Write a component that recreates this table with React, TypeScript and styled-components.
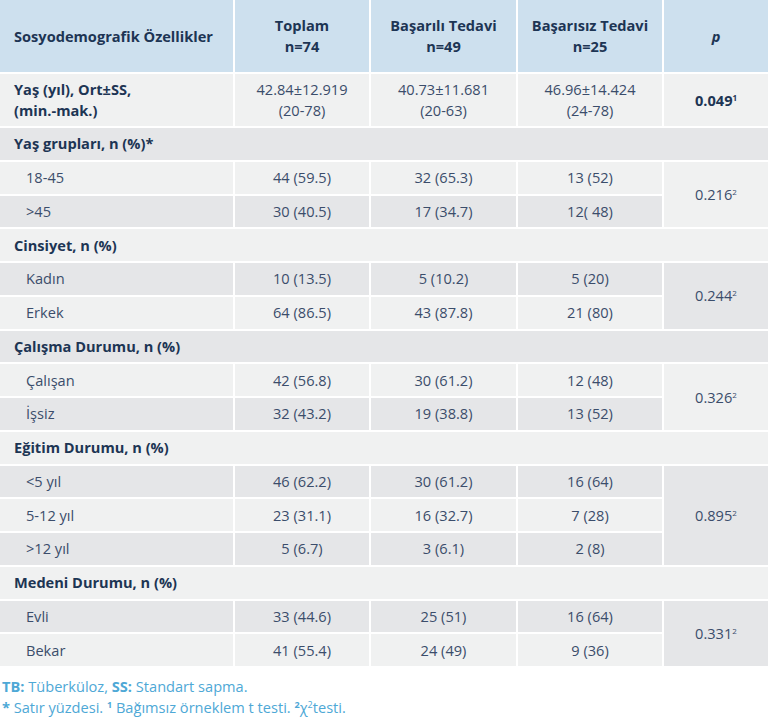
import React from 'react'
import styled, { createGlobalStyle } from 'styled-components'

const GlobalStyle = createGlobalStyle`
  html, body {
    margin: 0;
    padding: 0;
    background: #ffffff;
    overflow: hidden;
  }
  body {
    font-family: 'Open Sans', 'Noto Sans', sans-serif;
  }
`

const Wrapper = styled.div`
  width: 768px;
  overflow: hidden;
`

const Table = styled.table`
  border-collapse: separate;
  border-spacing: 2px;
  margin: -2px -2px 0;
  width: calc(100% + 4px);
  table-layout: fixed;
  font-size: 14.6px;
  color: #3b4d6b;

  tbody tr:nth-child(odd) td {
    background: #f0f1f1;
  }
  tbody tr:nth-child(even) td {
    background: #e5e6e8;
  }
`

const HeadCell = styled.th<{ $align?: string }>`
  background: #cde0ee;
  color: #1d3554;
  font-weight: 700;
  font-size: 14.6px;
  line-height: 21px;
  height: 72px;
  padding: 0 ${(p) => (p.$align === 'left' ? '14px' : '4px')};
  box-sizing: border-box;
  white-space: nowrap;
  text-align: ${(p) => p.$align || 'center'};
  vertical-align: middle;
`

const PHead = styled.span`
  font-style: italic;
`

const Cell = styled.td<{ $indent?: boolean; $bold?: boolean; $align?: string }>`
  height: 31.75px;
  box-sizing: border-box;
  padding: 0 ${(p) => (p.$indent ? '26px' : '14px')};
  line-height: 21px;
  text-align: ${(p) => p.$align || 'center'};
  font-weight: ${(p) => (p.$bold ? 700 : 400)};
  color: ${(p) => (p.$bold ? '#1d3554' : '#3b4d6b')};
  vertical-align: middle;
`

const TallCell = styled(Cell)`
  height: 52px;
`

const Sup = styled.sup`
  font-size: 8px;
  line-height: 0;
  vertical-align: 5px;
`

const Footer = styled.div`
  padding: 8px 2px 0;
  color: #4ea8d6;
  font-size: 14.6px;
  line-height: 21px;
`

const FooterStrong = styled.b`
  font-weight: 700;
`

const FootSup = styled.sup<{ $bold?: boolean }>`
  font-size: 9px;
  font-weight: ${(p) => (p.$bold ? 700 : 400)};
  line-height: 0;
  vertical-align: 5px;
`

type Group = {
  title: string
  rows: [string, string, string, string][]
  p: string
}

const groups: Group[] = [
  {
    title: 'Yaş grupları, n (%)*',
    rows: [
      ['18-45', '44 (59.5)', '32 (65.3)', '13 (52)'],
      ['>45', '30 (40.5)', '17 (34.7)', '12( 48)'],
    ],
    p: '0.216',
  },
  {
    title: 'Cinsiyet, n (%)',
    rows: [
      ['Kadın', '10 (13.5)', '5 (10.2)', '5 (20)'],
      ['Erkek', '64 (86.5)', '43 (87.8)', '21 (80)'],
    ],
    p: '0.244',
  },
  {
    title: 'Çalışma Durumu, n (%)',
    rows: [
      ['Çalışan', '42 (56.8)', '30 (61.2)', '12 (48)'],
      ['İşsiz', '32 (43.2)', '19 (38.8)', '13 (52)'],
    ],
    p: '0.326',
  },
  {
    title: 'Eğitim Durumu, n (%)',
    rows: [
      ['<5 yıl', '46 (62.2)', '30 (61.2)', '16 (64)'],
      ['5-12 yıl', '23 (31.1)', '16 (32.7)', '7 (28)'],
      ['>12 yıl', '5 (6.7)', '3 (6.1)', '2 (8)'],
    ],
    p: '0.895',
  },
  {
    title: 'Medeni Durumu, n (%)',
    rows: [
      ['Evli', '33 (44.6)', '25 (51)', '16 (64)'],
      ['Bekar', '41 (55.4)', '24 (49)', '9 (36)'],
    ],
    p: '0.331',
  },
]

const App = () => (
  <Wrapper>
    <GlobalStyle />
    <Table>
      <colgroup>
        <col style={{ width: 233 }} />
        <col style={{ width: 134 }} />
        <col style={{ width: 145 }} />
        <col style={{ width: 144 }} />
        <col />
      </colgroup>
      <thead>
        <tr>
          <HeadCell $align='left'>Sosyodemografik Özellikler</HeadCell>
          <HeadCell>
            Toplam
            <br />
            n=74
          </HeadCell>
          <HeadCell>
            Başarılı Tedavi
            <br />
            n=49
          </HeadCell>
          <HeadCell>
            Başarısız Tedavi
            <br />
            n=25
          </HeadCell>
          <HeadCell>
            <PHead>p</PHead>
          </HeadCell>
        </tr>
      </thead>
      <tbody>
        <tr>
          <TallCell $align='left' $bold>
            Yaş (yıl), Ort±SS,
            <br />
            (min.-mak.)
          </TallCell>
          <TallCell>
            42.84±12.919
            <br />
            (20-78)
          </TallCell>
          <TallCell>
            40.73±11.681
            <br />
            (20-63)
          </TallCell>
          <TallCell>
            46.96±14.424
            <br />
            (24-78)
          </TallCell>
          <TallCell $bold>
            0.049<Sup>1</Sup>
          </TallCell>
        </tr>
        {groups.map((group) => (
          <React.Fragment key={group.title}>
            <tr>
              <Cell $align='left' $bold colSpan={5}>
                {group.title}
              </Cell>
            </tr>
            {group.rows.map((row, i) => (
              <tr key={row[0]}>
                <Cell $align='left' $indent>
                  {row[0]}
                </Cell>
                <Cell>{row[1]}</Cell>
                <Cell>{row[2]}</Cell>
                <Cell>{row[3]}</Cell>
                {i === 0 && (
                  <Cell rowSpan={group.rows.length}>
                    {group.p}
                    <Sup>2</Sup>
                  </Cell>
                )}
              </tr>
            ))}
          </React.Fragment>
        ))}
      </tbody>
    </Table>
    <Footer>
      <div>
        <FooterStrong>TB:</FooterStrong> Tüberküloz, <FooterStrong>SS:</FooterStrong> Standart sapma.
      </div>
      <div>
        <FooterStrong>*</FooterStrong> Satır yüzdesi. <FootSup $bold>1</FootSup> Bağımsız örneklem t testi.{' '}
        <FootSup $bold>2</FootSup>χ<FootSup>2</FootSup>testi.
      </div>
    </Footer>
  </Wrapper>
)

export default App
